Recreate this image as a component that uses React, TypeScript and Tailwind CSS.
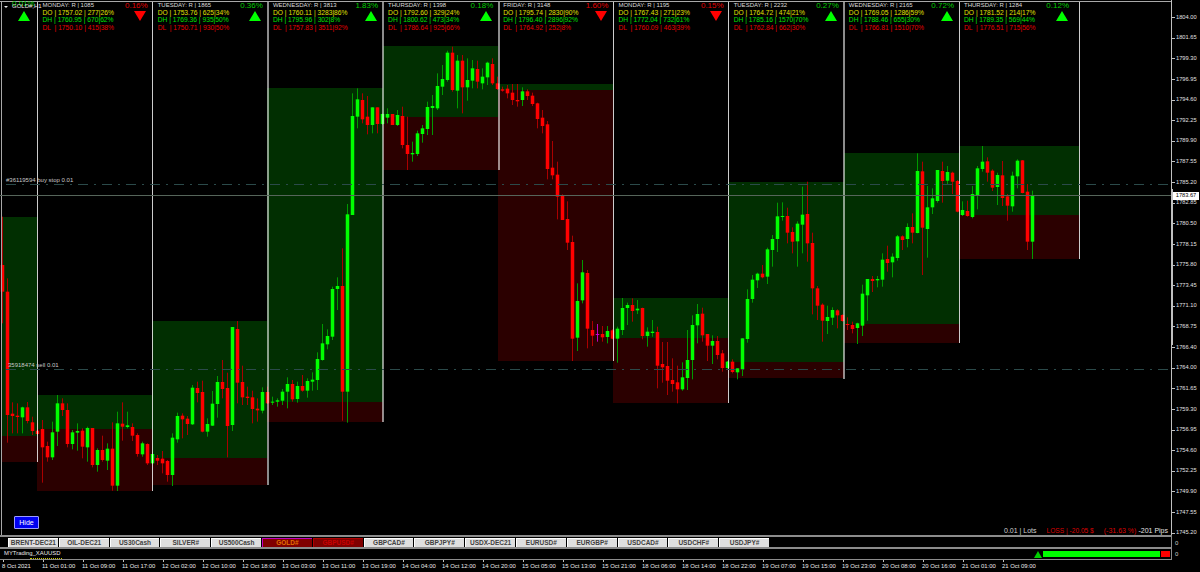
import * as React from "react";

// candle rows: [colour, bodyTop, bodyBottom, wickTop, wickBottom], read off the chart at 3x
type Row = [string, number, number, number, number];

const rowsA: Row[] = [
  ["r", 225, 305, 80, 400], ["r", 305, 675, 265, 758], ["r", 671, 678, 637, 730], ["r", 677, 681, 640, 730],
  ["g", 652, 682, 650, 730], ["r", 652, 693, 636, 700], ["r", 697, 723, 680, 735], ["r", 722, 732, 700, 735],
  ["r", 717, 772, 690, 878], ["r", 768, 802, 755, 815], ["g", 727, 802, 695, 810], ["g", 640, 725, 615, 768],
  ["r", 640, 660, 625, 678], ["r", 660, 762, 640, 772], ["g", 727, 762, 720, 778], ["g", 723, 728, 700, 782],
  ["r", 722, 770, 715, 805], ["g", 714, 772, 710, 815], ["r", 714, 825, 714, 832], ["g", 780, 825, 775, 845],
  ["r", 780, 810, 737, 815], ["g", 776, 812, 760, 840], ["r", 776, 887, 697, 902], ["g", 700, 887, 665, 903],
  ["r", 701, 710, 637, 752], ["g", 706, 711, 665, 715], ["r", 711, 737, 700, 753], ["r", 735, 792, 730, 800],
  ["g", 760, 793, 755, 800], ["r", 762, 820, 760, 825], ["g", 792, 820, 785, 822], ["r", 804, 812, 795, 825],
  ["r", 806, 820, 783, 850], ["r", 813, 855, 810, 875], ["g", 743, 855, 730, 888], ["g", 678, 748, 668, 758],
  ["r", 677, 688, 670, 745], ["r", 686, 702, 678, 735], ["g", 593, 703, 585, 705], ["r", 594, 609, 575, 637],
  ["r", 606, 725, 572, 727], ["g", 702, 725, 685, 740], ["g", 641, 707, 603, 708], ["g", 576, 642, 558, 683],
  ["r", 576, 597, 510, 625], ["r", 594, 708, 548, 802], ["g", 411, 705, 411, 723], ["r", 417, 578, 393, 640],
  ["r", 576, 622, 527, 645], ["r", 620, 624, 590, 645], ["r", 622, 657, 602, 700], ["r", 656, 661, 625, 695],
  ["g", 606, 662, 592, 670], ["r", 606, 640, 590, 642], ["g", 635, 638, 620, 645], ["g", 631, 635, 625, 650],
  ["g", 605, 632, 597, 645], ["g", 582, 605, 562, 655], ["r", 582, 628, 570, 635], ["g", 588, 627, 575, 638],
  ["r", 588, 602, 555, 605], ["g", 573, 602, 565, 623], ["g", 569, 575, 547, 602], ["g", 507, 570, 487, 600],
  ["g", 460, 510, 402, 512], ["g", 438, 463, 418, 478], ["g", 297, 440, 290, 450], ["g", 288, 297, 262, 360],
  ["r", 288, 605, 175, 692], ["g", 73, 605, 42, 698],
];

const rowsB: Row[] = [
  ["g", 348, 645, 280, 645], ["g", 298, 350, 265, 385], ["r", 300, 358, 280, 370], ["r", 350, 375, 288, 403],
  ["g", 322, 375, 322, 400], ["r", 322, 372, 322, 400], ["g", 342, 372, 340, 375], ["g", 342, 353, 325, 370],
  ["r", 342, 375, 342, 375], ["g", 345, 375, 330, 378], ["r", 348, 435, 320, 445], ["r", 435, 462, 350, 510],
  ["g", 459, 463, 425, 485], ["g", 400, 462, 392, 468], ["g", 385, 402, 375, 428], ["g", 321, 387, 305, 405],
  ["g", 318, 324, 285, 405], ["g", 258, 325, 220, 330], ["g", 237, 260, 195, 285], ["g", 158, 240, 152, 245],
  ["r", 158, 270, 140, 275], ["g", 182, 272, 165, 325], ["r", 182, 262, 165, 340], ["g", 240, 262, 175, 302],
  ["g", 205, 242, 180, 265], ["r", 207, 245, 182, 265], ["g", 230, 250, 205, 268], ["g", 188, 232, 185, 255],
  ["r", 192, 250, 175, 255], ["r", 250, 267, 230, 270], ["r", 268, 272, 260, 275], ["r", 266, 280, 255, 295],
  ["r", 278, 300, 252, 315], ["r", 300, 304, 252, 320], ["g", 274, 300, 262, 318], ["r", 274, 288, 268, 300],
  ["r", 287, 312, 278, 318], ["r", 310, 357, 308, 385], ["r", 353, 378, 330, 400],
];

const rowsC: Row[] = [
  ["r", 193, 327, 183, 358], ["r", 323, 346, 243, 358], ["r", 344, 410, 305, 478], ["r", 407, 480, 403, 480],
  ["r", 477, 548, 424, 570], ["r", 546, 836, 527, 903], ["g", 723, 833, 670, 873], ["g", 637, 721, 600, 730],
  ["r", 639, 806, 630, 865], ["r", 810, 827, 783, 858], ["m", 822, 824, 792, 845], ["r", 822, 832, 798, 845],
  ["g", 813, 831, 798, 850], ["r", 811, 836, 808, 838], ["g", 806, 836, 800, 908], ["g", 744, 810, 714, 825],
  ["g", 735, 744, 728, 795], ["r", 735, 753, 715, 785], ["g", 746, 751, 720, 762], ["r", 744, 828, 743, 838],
  ["g", 815, 828, 802, 860], ["g", 815, 819, 780, 830], ["r", 816, 917, 800, 985], ["r", 912, 922, 846, 968],
  ["r", 918, 962, 846, 1005], ["r", 960, 972, 895, 995], ["r", 967, 988, 917, 1030], ["g", 952, 988, 907, 992],
  ["g", 900, 954, 810, 990], ["g", 795, 900, 766, 958], ["g", 762, 796, 732, 850], ["r", 761, 826, 743, 845],
  ["r", 822, 857, 822, 903], ["g", 843, 857, 826, 912], ["r", 843, 885, 828, 898], ["r", 880, 924, 870, 935],
  ["g", 905, 924, 903, 926], ["r", 905, 936, 898, 940], ["g", 925, 937, 925, 958], ["g", 835, 928, 835, 948],
  ["g", 717, 837, 688, 848], ["g", 659, 717, 645, 728], ["g", 641, 661, 638, 684], ["r", 641, 652, 615, 655],
  ["g", 568, 650, 563, 672], ["g", 537, 570, 525, 620], ["g", 469, 537, 428, 576], ["g", 468, 471, 427, 482],
  ["r", 468, 518, 443, 550], ["r", 516, 545, 502, 580], ["g", 491, 544, 484, 620],
];

const rowsD: Row[] = [
  ["g", 254, 284, 170, 370], ["r", 252, 340, 155, 395], ["r", 339, 475, 308, 553], ["r", 475, 527, 468, 570],
  ["r", 524, 572, 520, 635], ["g", 561, 573, 527, 612], ["g", 540, 563, 532, 585], ["r", 541, 556, 538, 595],
  ["r", 555, 573, 553, 575], ["r", 582, 585, 562, 600], ["r", 585, 597, 575, 610], ["g", 580, 594, 578, 642],
  ["g", 491, 587, 464, 618], ["g", 447, 496, 447, 572], ["r", 447, 453, 438, 486], ["g", 447, 451, 438, 472],
  ["g", 389, 449, 370, 470], ["r", 387, 399, 347, 425], ["g", 380, 397, 370, 442], ["g", 319, 384, 315, 392],
  ["r", 319, 330, 316, 360], ["g", 291, 327, 280, 352], ["r", 291, 308, 250, 340], ["g", 123, 309, 70, 310],
  ["r", 124, 293, 95, 435], ["g", 232, 297, 168, 383], ["g", 205, 232, 175, 252], ["g", 120, 213, 120, 218],
  ["r", 123, 153, 95, 218], ["g", 126, 152, 108, 162], ["r", 128, 155, 125, 192], ["r", 153, 245, 150, 247],
  ["g", 240, 255, 214, 258], ["r", 243, 258, 212, 260], ["g", 192, 261, 168, 265], ["g", 115, 197, 108, 238],
  ["g", 95, 117, 48, 125], ["r", 94, 128, 82, 155], ["r", 122, 173, 118, 183], ["g", 135, 171, 128, 225],
  ["r", 136, 204, 93, 228], ["r", 199, 227, 192, 272], ["g", 137, 229, 125, 245], ["g", 92, 139, 88, 175],
  ["r", 91, 189, 90, 190], ["r", 185, 335, 162, 360], ["g", 195, 335, 182, 387],
];

const toPx = (rows: Row[], top: number): Row[] =>
  rows.map(([c, a, b, d, e]) => [c, top + a / 3, top + b / 3, top + d / 3, top + e / 3]);

const candles = [...toPx(rowsA, 190), ...toPx(rowsB, 0), ...toPx(rowsC, 60), ...toPx(rowsD, 130)];

const bodyColor: Record<string, string> = { g: "#00ff00", r: "#ff0000", m: "#d000d0" };
const wickColor: Record<string, string> = { g: "#009a00", r: "#aa0000", m: "#c000c0" };

// x, width, top of green, green/red split, bottom of red
const panels = [
  [1, 36, 217, 435.5, 462],
  [37, 115, 395, 429, 490.5],
  [152, 115, 321, 457.5, 485],
  [267, 116, 88, 402, 422],
  [383, 115, 46, 116.5, 169.5],
  [498, 115, 84, 89.5, 360.5],
  [613, 115, 298, 338, 402.5],
  [728, 116, 182, 361.5, 378],
  [844, 115, 153, 324, 343],
  [959, 120, 146, 214.5, 258.5],
];

// x, width, bottom, opacity
const dayLines = [
  [37, 1, 462, 0.8],
  [152, 1, 491, 0.8],
  [267, 2, 485, 0.55],
  [382, 2, 422, 0.55],
  [498, 2, 170, 0.55],
  [613, 1, 361, 0.8],
  [728, 1, 403, 0.8],
  [843, 2, 379, 0.55],
  [959, 1, 343, 0.8],
  [1079, 1, 259, 0.8],
];

const days = [
  { name: "MONDAY: R | 1085", o: "1757.02 | 277|26%", h: "1760.95 | 670|62%", l: "1750.10 | 415|38%", pct: "0.16%", up: false },
  { name: "TUESDAY: R | 1865", o: "1753.76 | 625|34%", h: "1769.36 | 935|50%", l: "1750.71 | 930|50%", pct: "0.36%", up: true },
  { name: "WEDNESDAY: R | 3813", o: "1760.11 | 3283|86%", h: "1795.96 | 302|8%", l: "1757.83 | 3511|92%", pct: "1.83%", up: true },
  { name: "THURSDAY: R | 1398", o: "1792.60 | 329|24%", h: "1800.62 | 473|34%", l: "1786.64 | 925|66%", pct: "0.18%", up: true },
  { name: "FRIDAY: R | 3148", o: "1795.74 | 2830|90%", h: "1796.40 | 2896|92%", l: "1764.92 | 252|8%", pct: "1.60%", up: false },
  { name: "MONDAY: R | 1195", o: "1767.43 | 271|23%", h: "1772.04 | 732|61%", l: "1760.09 | 463|39%", pct: "0.15%", up: false },
  { name: "TUESDAY: R | 2232", o: "1764.72 | 474|21%", h: "1785.16 | 1570|70%", l: "1762.84 | 662|30%", pct: "0.27%", up: true },
  { name: "WEDNESDAY: R | 2165", o: "1769.05 | 1286|59%", h: "1788.46 | 655|30%", l: "1766.81 | 1510|70%", pct: "0.72%", up: true },
  { name: "THURSDAY: R | 1284", o: "1781.52 | 214|17%", h: "1789.35 | 569|44%", l: "1776.51 | 715|56%", pct: "0.12%", up: true },
];

const prices = [
  "1804.00", "1801.65", "1799.30", "1796.95", "1794.60", "1792.25", "1789.90", "1787.55", "1785.20",
  "1782.85", "1780.50", "1778.15", "1775.80", "1773.45", "1771.10", "1768.75", "1766.40", "1764.00",
  "1761.65", "1759.30", "1756.95", "1754.60", "1752.25", "1749.90", "1747.55", "1745.20",
];

const times = [
  "8 Oct 2021", "11 Oct 01:00", "11 Oct 09:00", "11 Oct 17:00", "12 Oct 02:00", "12 Oct 10:00", "12 Oct 18:00",
  "13 Oct 03:00", "13 Oct 11:00", "13 Oct 19:00", "14 Oct 04:00", "14 Oct 12:00", "14 Oct 20:00", "15 Oct 05:00",
  "15 Oct 13:00", "15 Oct 21:00", "18 Oct 06:00", "18 Oct 14:00", "18 Oct 22:00", "19 Oct 07:00", "19 Oct 15:00",
  "19 Oct 23:00", "20 Oct 08:00", "20 Oct 16:00", "21 Oct 01:00", "21 Oct 09:00",
];

const symbols = [
  "BRENT-DEC21", "OIL-DEC21", "US30Cash", "SILVER#", "US500Cash", "GOLD#", "GBPUSD#", "GBPCAD#",
  "GBPJPY#", "USDX-DEC21", "EURUSD#", "EURGBP#", "USDCAD#", "USDCHF#", "USDJPY#",
];

function Triangle({ up }: { up: boolean }) {
  return (
    <svg width="12" height="10" viewBox="0 0 12 10" className="block">
      <polygon points={up ? "6,0 12,10 0,10" : "0,0 12,0 6,10"} fill={up ? "#00ff00" : "#ff0000"} />
    </svg>
  );
}

function Chart() {
  return (
    <svg width="1171" height="535" className="absolute inset-0">
      <g shapeRendering="crispEdges">
        {panels.map(([x, w, top, mid, bottom]) => (
          <g key={x}>
            <rect x={x} y={top} width={w} height={mid - top} fill="#012f01" />
            <rect x={x} y={mid} width={w} height={bottom - mid} fill="#2b0000" />
          </g>
        ))}
      </g>
      {candles.map(([c, bt, bb, wt, wb], i) => (
        <g key={i}>
          <rect x={5 * i + 2} y={wt} width={1} height={wb - wt} fill={wickColor[c]} />
          <rect x={5 * i + 0.75} y={bt} width={3.5} height={Math.max(bb - bt, 1)} fill={bodyColor[c]} />
        </g>
      ))}
      <g shapeRendering="crispEdges">
        {dayLines.map(([x, w, bottom, op]) => (
          <rect key={x} x={x} y={1} width={w} height={bottom - 1} fill="#ffffff" opacity={op} />
        ))}
        <rect x={0} y={1} width={1171} height={1} fill="#a8a8a8" />
        <rect x={1} y={1} width={1} height={534} fill="#a8a8a8" />
        <line x1={6} x2={1171} y1={184.5} y2={184.5} stroke="#2b4a4a" strokeDasharray="10 6 2 6" />
        <line x1={6} x2={1171} y1={369.5} y2={369.5} stroke="#2b4a4a" strokeDasharray="10 6 2 6" />
        <rect x={0} y={195} width={1171} height={1} fill="#56655a" />
      </g>
    </svg>
  );
}

function DayHead({ day, wide }: { day: (typeof days)[number]; wide?: boolean }) {
  return (
    <div className={`flex justify-between pl-[5px] pr-[5px] ${wide ? "w-[120px]" : "w-[115.2px]"}`}>
      <div className="whitespace-pre pt-[1.6px] text-[6.7px] leading-[7.4px]">
        <div className="text-[6px] text-[#dcdcdc]">{day.name}</div>
        <div className="text-[#e0e000]">DO | {day.o}</div>
        <div className="text-[#00e000]">DH | {day.h}</div>
        <div className="text-[#e60000]">DL  | {day.l}</div>
      </div>
      <div className={`flex flex-col items-end ${wide ? "pr-[5px]" : ""}`}>
        <div className={`pt-[1px] text-[8px] leading-[9px] ${day.up ? "text-[#00cc00]" : "text-[#e00000]"}`}>{day.pct}</div>
        <div className="mr-[1.5px] mt-[0.5px]">
          <Triangle up={day.up} />
        </div>
      </div>
    </div>
  );
}

function MainPane() {
  return (
    <div className="relative h-[535px] w-[1171px]">
      <Chart />
      <div className="absolute left-0 top-0 flex">
        <div className="relative w-[37.5px]">
          <div className="absolute left-[12px] top-[-1px] text-[8px] leading-[9px] text-[#00cc00]">0.01%</div>
          <div className="absolute left-[18px] top-[11px]">
            <Triangle up />
          </div>
          <div className="absolute left-[4px] top-[5.5px] h-0 w-0 border-x-[2.5px] border-t-[2.5px] border-x-transparent border-t-[#e8e8e8]" />
          <div className="absolute left-[12px] top-[3px] whitespace-pre text-[6px] leading-[7.4px] text-[#e8e8e8]">GOLD#,H1</div>
        </div>
        {days.map((day, i) => (
          <DayHead key={i} day={day} wide={i === days.length - 1} />
        ))}
      </div>
      <div className="absolute left-[6px] top-[177px] text-[6px] leading-[7.4px] text-[#c8c8c8]">#36119594 buy stop 0.01</div>
      <div className="absolute left-[8px] top-[362px] text-[6px] leading-[7.4px] text-[#c8c8c8]">35918474 sell 0.01</div>
      <button className="absolute left-[14px] top-[516px] h-[12.5px] w-[25px] rounded-[1px] border border-[#9a9aff] bg-[#0000f0] text-[7px] leading-none text-white">
        Hide
      </button>
      <div className="absolute bottom-[0.5px] right-[3px] flex whitespace-pre text-[7px] leading-[8px]">
        <span className="text-[#d0d0d0]">0.01 | Lots</span>
        <span className="ml-[10px] text-[6.6px] text-[#dc0000]">LOSS | -20.05 $</span>
        <span className="ml-[10px] text-[#dc0000]">(-31.63 %)</span>
        <span className="ml-[2px] text-[#e0e0e0]">-201 Pips</span>
      </div>
    </div>
  );
}

function PriceAxis() {
  return (
    <div className="relative h-[535px] w-[29px] border-l border-[#c0c0c0] pt-[7.2px]">
      <div className="absolute left-[-1px] top-[189px] h-[156px] w-[2px] bg-[#c0c0c0]" />
      {prices.map((p) => (
        <div key={p} className="flex h-[20.63px] items-center">
          <div className="h-px w-[3px] bg-[#c0c0c0]" />
          <span className="ml-[1px] text-[5.7px] leading-none text-[#e0e0e0]">{p}</span>
        </div>
      ))}
      <div className="absolute left-[1px] top-[192px] flex h-[7.5px] w-[26px] items-center justify-center bg-white text-[5.7px] leading-none text-black">
        1783.67
      </div>
    </div>
  );
}

function SymbolTabs() {
  return (
    <div className="flex h-[10px] items-end gap-[1px] overflow-hidden pl-[8px]">
      {symbols.map((s) => {
        const active = s === "GOLD#";
        const dim = s === "GBPUSD#";
        return (
          <div
            key={s}
            className={`flex h-[9.5px] w-[49.8px] shrink-0 items-center justify-center border-l border-t text-[6.5px] font-bold leading-none ${
              active
                ? "border-[#c000c0] bg-[#800000] text-[#e07000]"
                : dim
                  ? "border-[#b00000] bg-[#800000] text-[#c80000]"
                  : "border-white bg-[#dfdfdf] text-[#404040]"
            }`}
          >
            {s}
          </div>
        );
      })}
    </div>
  );
}

function SubWindow() {
  return (
    <div className="relative flex h-[10px] items-center justify-between overflow-hidden pl-[4px]">
      <span className="text-[5.9px] leading-none text-[#e8e8e8]">MYTrading_XAUUSD</span>
      <div className="flex items-center pr-[1.5px]">
        <svg width="8" height="7" viewBox="0 0 8 7" className="block">
          <polygon points="4,0 8,7 0,7" fill="#00d000" />
        </svg>
        <div className="ml-[1px] h-[6px] w-[117px] bg-[#00ff00]" />
        <div className="ml-[1px] h-[6px] w-[9px] bg-[#ff0000]" />
      </div>
      <div className="absolute bottom-0 left-[30px] h-px w-[32px] border-b border-dotted border-[#c8c800]" />
    </div>
  );
}

export default function App() {
  return (
    <div className="h-[572px] w-[1200px] overflow-hidden bg-black font-['Liberation_Sans',Arial,sans-serif]">
      <div className="flex">
        <MainPane />
        <PriceAxis />
      </div>
      <div className="flex h-[24px]">
        <div className="h-[25px] w-[1172px] border-r border-b border-[#8c8c8c]">
          <div className="h-[2px] bg-[#8c8c8c]" />
          <SymbolTabs />
          <div className="h-[2px] bg-[#8c8c8c]" />
          <SubWindow />
        </div>
        <div className="flex w-[28px] flex-col pl-[3px] pt-[3px] text-[6px] leading-[11px] text-[#c8c8c8]">
          <span>0</span>
          <span>0</span>
        </div>
      </div>
      <div className="flex h-[13px] pl-[2px] pt-[1px]">
        {times.map((t) => (
          <div key={t} className="w-[40px] shrink-0">
            <div className="ml-[0.5px] h-[2px] w-px bg-[#c0c0c0]" />
            <div className="mt-[0.5px] whitespace-pre text-[5.9px] leading-[7px] text-[#ececec]">{t}</div>
          </div>
        ))}
      </div>
    </div>
  );
}
